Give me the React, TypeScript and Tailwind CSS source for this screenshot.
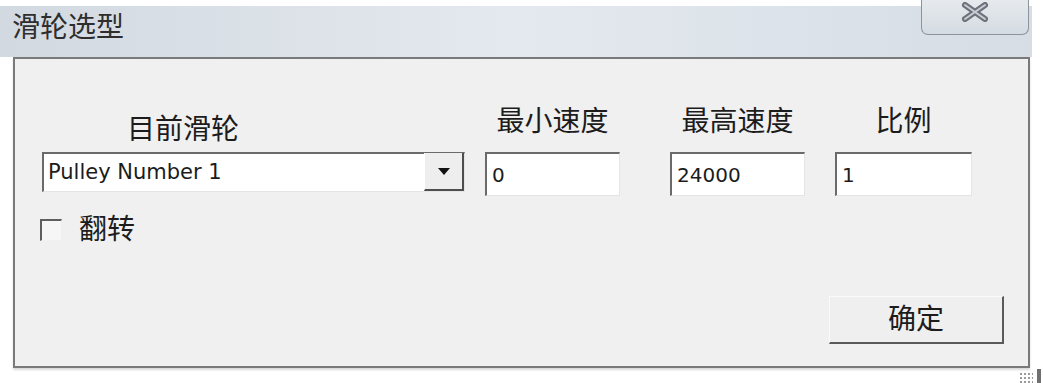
import React from 'react';

const sunken =
  'border-t-2 border-l-2 border-r border-b border-t-[#6a6a6a] border-l-[#6a6a6a] border-r-[#e4e4e4] border-b-[#e4e4e4] bg-white';

interface FieldProps {
  label: string;
  value: string;
  className: string;
}

function NumberField({ label, value, className }: FieldProps) {
  return (
    <div className={`flex flex-col ${className}`}>
      <div className="h-[32px] text-center text-[28px] leading-[32px] text-[#1c1c1c] mb-[14px]">
        {label}
      </div>
      <div className={`h-[44px] flex items-center pl-[5px] text-[20px] text-[#1c1c1c] ${sunken}`}>
        {value}
      </div>
    </div>
  );
}

function CloseGlyph() {
  return (
    <svg width="32" height="20" viewBox="0 0 32 20">
      <path d="M6 3 L26 17 M26 3 L6 17" stroke="#6c717a" strokeWidth="6" strokeLinecap="round" />
      <path d="M6 3 L26 17 M26 3 L6 17" stroke="#c9ced6" strokeWidth="2" strokeLinecap="round" />
    </svg>
  );
}

export default function App() {
  return (
    <div
      className="w-[1043px] h-[383px] bg-white overflow-hidden"
      style={{ fontFamily: '"DejaVu Sans", "Noto Sans CJK SC", sans-serif' }}
    >
      {/* Window */}
      <div className="w-[1032px] pt-[6px]">
        {/* Title bar */}
        <div className="h-[51px] flex justify-between bg-gradient-to-r from-[#d3d9e1] via-[#e4e9ef] to-[#d6dde5]">
          <div className="pl-[12px] pt-[4px] text-[28px] leading-[36px] text-[#2e2e2e]">滑轮选型</div>
          <div className="-mt-[6px] mr-[3px] w-[108px] h-[35px] flex items-start justify-center pt-[2px] border border-t-0 border-[#8d939b] rounded-b-[7px] bg-gradient-to-b from-[#e6eaee] to-[#d5dbe2]">
            <CloseGlyph />
          </div>
        </div>

        {/* Client area */}
        <div className="ml-[13px] w-[1017px] h-[311px] border-2 border-[#7a7a7a] bg-[#f0f0f0] flex flex-col shadow-[0_2px_2px_rgba(0,0,0,0.15)]">
          <div className="flex items-start pt-[47px] pl-[27px]">
            {/* Current pulley */}
            <div className="flex flex-col w-[423px]">
              <div className="h-[32px] mt-[8px] mb-[6px] pl-[85px] text-[28px] leading-[32px] text-[#1c1c1c]">
                目前滑轮
              </div>
              <div className={`h-[40px] flex items-center ${sunken}`}>
                <span className="flex-1 pl-[4px] text-[21px] text-[#1c1c1c]">Pulley Number 1</span>
                <div className="w-[40px] h-[38px] -mt-[1px] flex items-center justify-center bg-[#eeeeee] border-r-2 border-b-2 border-r-[#4e4e4e] border-b-[#4e4e4e] border-l border-l-[#ffffff]">
                  <svg width="12" height="7" viewBox="0 0 12 7">
                    <path d="M0 0 H12 L6 7 Z" fill="#111111" />
                  </svg>
                </div>
              </div>
              <div className="flex items-center mt-[22px] -ml-[2px]">
                <div className="w-[22px] h-[22px] bg-[#f6f6f6] border-t-2 border-l-2 border-r border-b border-t-[#5e5e5e] border-l-[#5e5e5e] border-r-[#f0f0f0] border-b-[#f0f0f0]" />
                <span className="ml-[17px] text-[28px] leading-[32px] text-[#1c1c1c]">翻转</span>
              </div>
            </div>

            <NumberField label="最小速度" value="0" className="w-[135px] ml-[20px]" />
            <NumberField label="最高速度" value="24000" className="w-[135px] ml-[50px]" />
            <NumberField label="比例" value="1" className="w-[137px] ml-[30px]" />
          </div>

          <div className="flex-1" />

          <div className="flex justify-end pr-[24px] pb-[22px]">
            <button className="w-[175px] h-[48px] flex items-center justify-center bg-[#efefef] border-t border-l border-t-[#fafafa] border-l-[#fafafa] border-r-2 border-b-2 border-r-[#5a5a5a] border-b-[#5a5a5a] text-[28px] leading-[32px] text-[#1c1c1c]">
              确定
            </button>
          </div>
        </div>
      </div>

      {/* Size grip */}
      <div className="flex justify-end pr-[2px] mt-[1px]">
        <div className="flex items-end gap-[4px]">
          <div className="w-[14px] h-[12px] bg-[radial-gradient(circle,#9a9a9a_1px,transparent_1.5px)] bg-[length:4px_4px]" />
          <div className="w-[4px] h-[15px] bg-[#707070]" />
        </div>
      </div>
    </div>
  );
}
